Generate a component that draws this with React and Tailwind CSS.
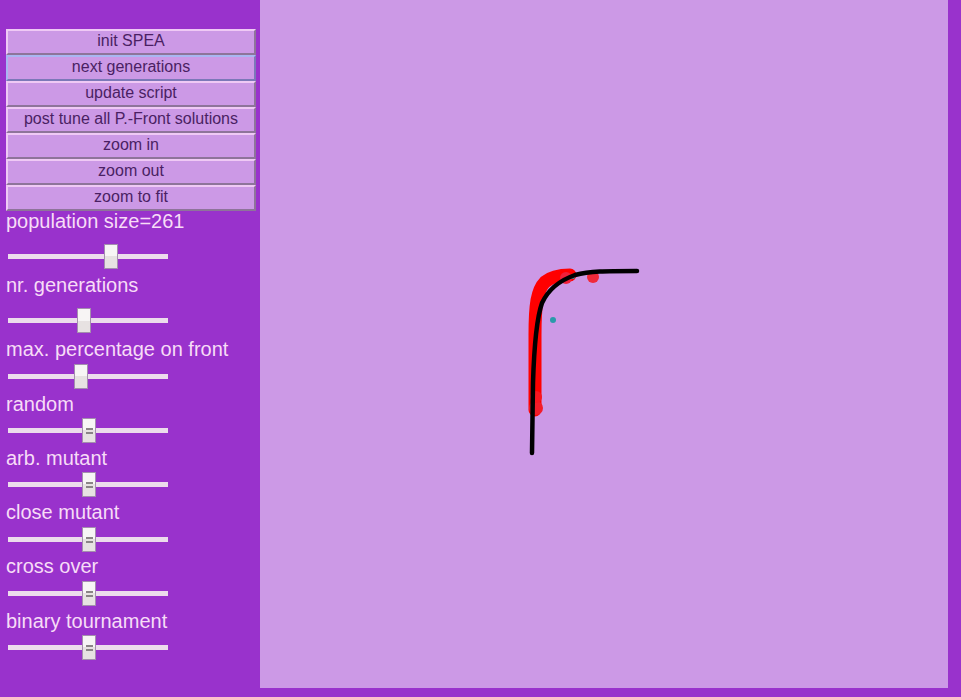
import React from "react"

const buttons = [
  "init SPEA",
  "next generations",
  "update script",
  "post tune all P.-Front solutions",
  "zoom in",
  "zoom out",
  "zoom to fit",
]

// label, row height, thumb offset in row, thumb left, grip
const sliders = [
  { label: "population size=261", h: "h-[43px]", top: "top-[12px]", left: "left-[104px]", grip: false },
  { label: "nr. generations", h: "h-[43px]", top: "top-[12px]", left: "left-[77px]", grip: false },
  { label: "max. percentage on front", h: "h-[34px]", top: "top-[4px]", left: "left-[74px]", grip: false },
  { label: "random", h: "h-[33px]", top: "top-[3px]", left: "left-[82px]", grip: true },
  { label: "arb. mutant", h: "h-[33px]", top: "top-[3px]", left: "left-[82px]", grip: true },
  { label: "close mutant", h: "h-[33px]", top: "top-[4px]", left: "left-[82px]", grip: true },
  { label: "cross over", h: "h-[34px]", top: "top-[4px]", left: "left-[82px]", grip: true },
  { label: "binary tournament", h: "h-[33px]", top: "top-[3px]", left: "left-[82px]", grip: true },
]

function Slider({ s }) {
  return (
    <div className={`relative ${s.h}`}>
      <div className={`absolute left-[2px] w-[160px] h-[5px] bg-[#ecdcec] ${s.top} mt-[10px]`} />
      <div
        className={`absolute ${s.left} ${s.top} -ml-[6px] w-[14px] h-[25px] border border-[#a48fae] bg-gradient-to-b from-[#f7f5f5] from-50% to-[#e7e2e2] to-50% flex flex-col items-center justify-center gap-[2px]`}
      >
        {s.grip && (
          <>
            <div className="w-[7px] h-[2px] bg-[#8a8486]" />
            <div className="w-[7px] h-[2px] bg-[#8a8486]" />
          </>
        )}
      </div>
    </div>
  )
}

export default function App() {
  return (
    <div
      className="w-[961px] h-[697px] bg-[#9932cc] flex overflow-hidden"
      style={{ fontFamily: '"Liberation Sans", Arial, sans-serif' }}
    >
      <div className="w-[260px] shrink-0 pt-[29px] px-[6px]">
        <div className="flex flex-col">
          {buttons.map((b, i) => (
            <button
              key={b}
              type="button"
              className={`w-[250px] h-[26px] bg-[#cc99e6] text-[16px] leading-[18px] pb-[2px] text-[#4a1f63] border-2 ${
                i === 1
                  ? "border-t-[#a9b6f2] border-l-[#a9b6f2] border-b-[#7c78b8] border-r-[#7c78b8]"
                  : "border-t-[#efc9f5] border-l-[#efc9f5] border-b-[#8e749a] border-r-[#8e749a]"
              }`}
            >
              {b}
            </button>
          ))}
        </div>
        <div className="flex flex-col">
          {sliders.map((s) => (
            <div key={s.label}>
              <div className="h-[21px] text-[20px] leading-[21px] text-[#f7dcf7] whitespace-nowrap">{s.label}</div>
              <Slider s={s} />
            </div>
          ))}
        </div>
      </div>
      <div className="w-[688px] h-[688px] shrink-0 bg-[#cc99e6]">
        <svg width="688" height="688" viewBox="0 0 688 688">
          <g transform="translate(-260 0)">
            <path
              d="M535 410 L535 335 C535 305 537 290 545 282 C552 276 562 275 570 275"
              fill="none"
              stroke="#ff0000"
              strokeWidth="13"
              strokeLinecap="round"
            />
            <circle cx="536" cy="408" r="7" fill="#f31c2a" />
            <circle cx="536" cy="397" r="6" fill="#f81620" />
            <circle cx="593" cy="277" r="6" fill="#f02a3a" />
            <circle cx="566" cy="278" r="6" fill="#f0203a" />
            <circle cx="553" cy="320" r="3" fill="#2a9aaa" />
            <circle cx="573" cy="277" r="2" fill="#2a9aaa" />
            <path
              d="M532 453 L533 383 C534 350 536 320 542 303 C548 290 558 281 575 275 C590 271 605 271 637 271"
              fill="none"
              stroke="#000"
              strokeWidth="4.5"
              strokeLinecap="round"
            />
          </g>
        </svg>
      </div>
    </div>
  )
}
